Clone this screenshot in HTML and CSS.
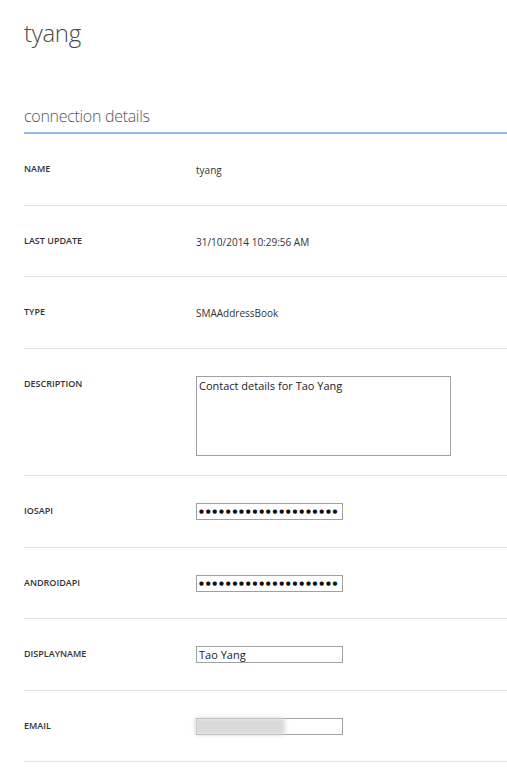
FILE: index.html
```html
<!DOCTYPE html>
<html>
<head>
<meta charset="utf-8">
<link rel="stylesheet" href="styles.css">
</head>
<body>
<main class="page">
  <h1 class="title">tyang</h1>
  <section class="details">
    <h2 class="section-title">connection details</h2>
    <div class="row">
      <div class="label">NAME</div>
      <div class="value">tyang</div>
    </div>
    <div class="row">
      <div class="label">LAST UPDATE</div>
      <div class="value">31/10/2014 10:29:56 AM</div>
    </div>
    <div class="row">
      <div class="label">TYPE</div>
      <div class="value">SMAAddressBook</div>
    </div>
    <div class="row row-desc">
      <div class="label">DESCRIPTION</div>
      <div class="field textarea">Contact details for Tao Yang</div>
    </div>
    <div class="row">
      <div class="label">IOSAPI</div>
      <div class="field input dots">●●●●●●●●●●●●●●●●●●●●●</div>
    </div>
    <div class="row">
      <div class="label">ANDROIDAPI</div>
      <div class="field input dots">●●●●●●●●●●●●●●●●●●●●●</div>
    </div>
    <div class="row">
      <div class="label">DISPLAYNAME</div>
      <div class="field input">Tao Yang</div>
    </div>
    <div class="row">
      <div class="label">EMAIL</div>
      <div class="field input email"><span class="blur"></span></div>
    </div>
  </section>
</main>
</body>
</html>
```

FILE: styles.css
```css
html, body {
  margin: 0;
  padding: 0;
  background: #ffffff;
}
body {
  font-family: "Open Sans", "Segoe UI", sans-serif;
  color: #333333;
}
.page {
  padding: 0 0 0 24px;
}
.title {
  margin: 0;
  padding-top: 17px;
  height: 90px;
  box-sizing: border-box;
  font-size: 24px;
  font-weight: 300;
  line-height: 32px;
  color: #4a4a4a;
  letter-spacing: -0.3px;
}
.section-title {
  margin: 0;
  padding-top: 15px;
  height: 44px;
  box-sizing: border-box;
  font-size: 16px;
  font-weight: 300;
  line-height: 22px;
  color: #555555;
  letter-spacing: -0.3px;
  border-bottom: 2px solid #92bde6;
}
.row {
  display: grid;
  grid-template-columns: 172px 1fr;
  align-items: start;
  padding: 27px 0 26.5px;
  border-bottom: 1px solid #e2e2e2;
  min-height: 17px;
}
.label {
  font-size: 9px;
  font-weight: 600;
  line-height: 12px;
  padding-top: 2px;
  color: #333333;
}
.value {
  font-size: 10px;
  line-height: 12px;
  padding-top: 3px;
  color: #333333;
}
.field {
  box-sizing: border-box;
  border: 1px solid #a0a0a0;
  background: #ffffff;
  font-size: 11px;
  color: #222222;
}
.textarea {
  width: 255px;
  height: 80px;
  padding: 2px 2px;
  line-height: 14px;
}
.row-desc {
  padding-bottom: 19.5px;
}
.input {
  width: 147px;
  height: 17px;
  padding: 0 2px;
  line-height: 15px;
}
.dots {
  font-family: "DejaVu Sans", sans-serif;
  font-size: 5.6px;
  line-height: 15px;
  padding: 0 0 0 2px;
  color: #111111;
  white-space: nowrap;
  letter-spacing: 1.8px;
}
.email {
  position: relative;
}
.blur {
  position: absolute;
  left: -2px;
  top: -1px;
  width: 90px;
  height: 17px;
  background: #d9d9d9;
  filter: blur(2px);
}
```
